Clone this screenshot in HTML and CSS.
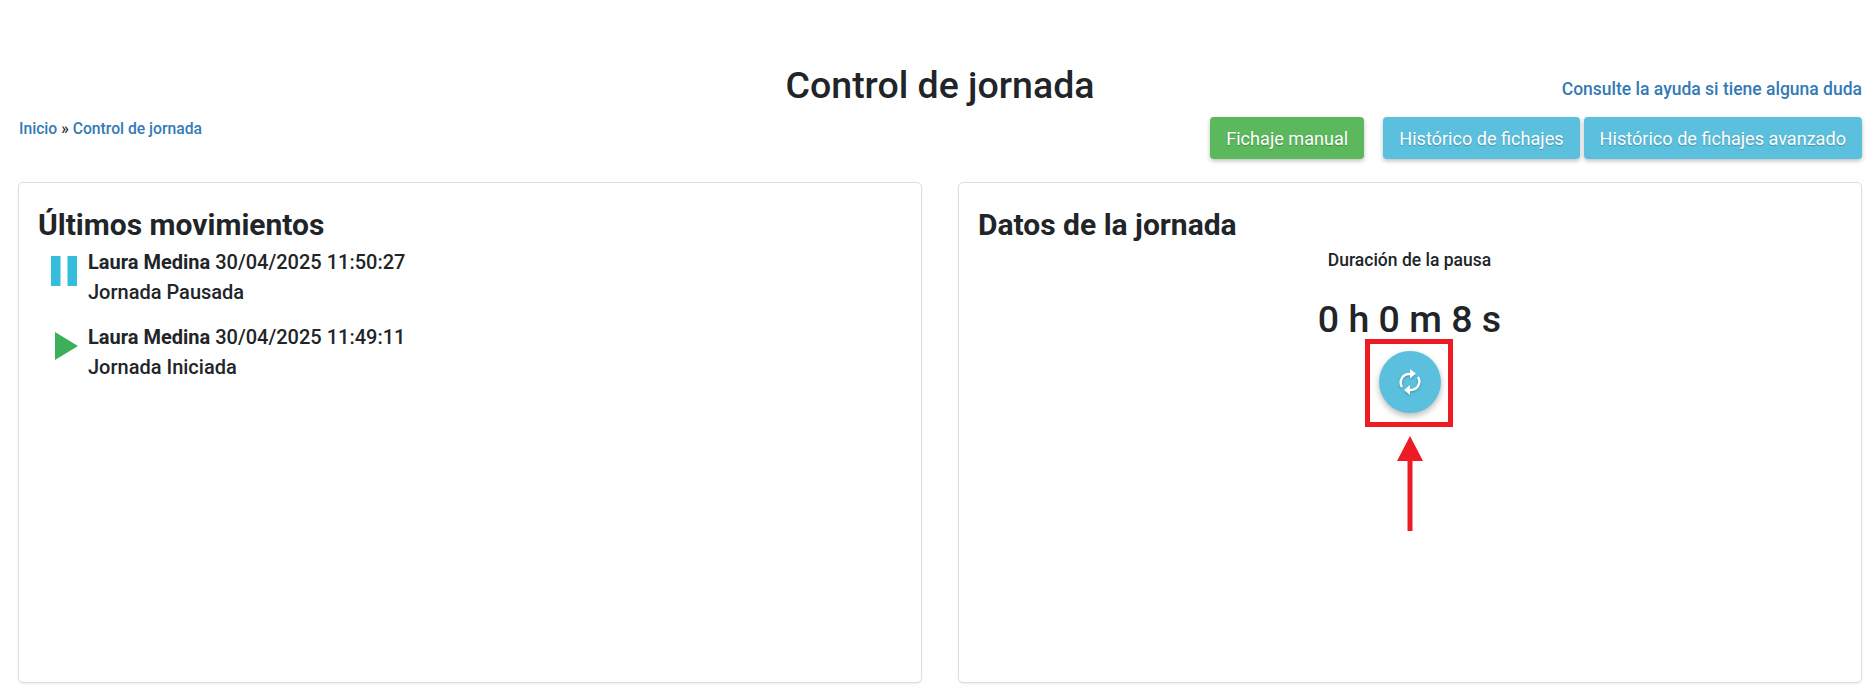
FILE: index.html
```html
<html>
  <head>
    <title>Control de jornada</title>
    <meta name="viewport" content="width=device-width, initial-scale=1.0">
    <link rel="stylesheet" href="styles.css">
  </head>
  <body>
    <div class="page">
      <div class="title_row">
        <div></div>
        <h1 class="page_title">Control de jornada</h1>
        <a class="help_link" href="#">Consulte la ayuda si tiene alguna duda</a>
      </div>

      <div class="tools_row">
        <div class="breadcrumb"><a href="#">Inicio</a> » <a href="#">Control de jornada</a></div>
        <div class="tools">
          <button class="btn btn_success btn_manual">Fichaje manual</button>
          <button class="btn btn_info">Histórico de fichajes</button>
          <button class="btn btn_info">Histórico de fichajes avanzado</button>
        </div>
      </div>

      <div class="panels">
        <section class="panel">
          <h2 class="panel_title">Últimos movimientos</h2>
          <div class="movement">
            <svg class="movement_icon" width="50" height="50" viewBox="0 0 50 50">
              <rect x="13" y="9" width="9.5" height="30" fill="#36bcdc"></rect>
              <rect x="29.5" y="9" width="9.5" height="30" fill="#36bcdc"></rect>
            </svg>
            <div>
              <div><b>Laura Medina</b> 30/04/2025 11:50:27</div>
              <div>Jornada Pausada</div>
            </div>
          </div>
          <div class="movement">
            <svg class="movement_icon" width="50" height="50" viewBox="0 0 50 50">
              <polygon points="17,10 40,24 17,38" fill="#3daf5b"></polygon>
            </svg>
            <div>
              <div><b>Laura Medina</b> 30/04/2025 11:49:11</div>
              <div>Jornada Iniciada</div>
            </div>
          </div>
        </section>

        <section class="panel">
          <h2 class="panel_title">Datos de la jornada</h2>
          <div class="pause_label">Duración de la pausa</div>
          <div class="pause_time">0 h 0 m 8 s</div>
          <div class="reload_wrap">
            <button class="reload_btn">
              <svg class="reload_icon" width="22" height="28" viewBox="0 0 22 28">
                <path d="M3 19 A8.5 8.5 0 0 1 11 6" fill="none" stroke="#fff" stroke-width="2.4"></path>
                <polygon points="11,1 17,5.5 11,10.5" fill="#fff"></polygon>
                <path d="M19 9 A8.5 8.5 0 0 1 11 22" fill="none" stroke="#fff" stroke-width="2.4"></path>
                <polygon points="11,17 5,22 11,27" fill="#fff"></polygon>
              </svg>
            </button>
            <!-- red annotation on top of the screenshot -->
            <div class="mark_box"></div>
            <svg class="mark_arrow" width="26" height="96" viewBox="0 0 26 96">
              <polygon points="13,0 26,25 15.5,25 15.5,95 10.5,95 10.5,25 0,25" fill="#ed1c24"></polygon>
            </svg>
          </div>
        </section>
      </div>
    </div>
  </body>
</html>
```

FILE: styles.css
```css
:root {
  --text: #212529;
  --link: #337ab7;
  --info: #5bc0de;
  --success: #5cb85c;
  --mark: #ed1c24;
}

html {
  overflow: hidden;
}

body {
  margin: 0;
  background-color: #ffffff;
  color: var(--text);
  font-family: Roboto, "Liberation Sans", sans-serif;
  font-size: 20px;
  font-weight: 500;
}

a {
  color: var(--link);
  text-decoration: none;
}

.page {
  padding: 61px 9px 0 18px;
}

.title_row {
  display: grid;
  grid-template-columns: 1fr auto 1fr;
  align-items: center;
  height: 48px;
}

.page_title {
  margin: 0;
  font-size: 37.5px;
  font-weight: 500;
  line-height: 48px;
}

.help_link {
  justify-self: end;
  font-size: 17.5px;
  margin-top: 8px;
}

.tools_row {
  display: flex;
  justify-content: space-between;
  align-items: flex-start;
  margin-top: 8px;
}

.breadcrumb {
  font-size: 15.7px;
  line-height: 24px;
  padding-left: 1px;
}

.tools {
  display: flex;
  gap: 4px;
}

.btn {
  height: 42px;
  padding: 0 16px;
  border: none;
  border-radius: 4px;
  color: #ffffff;
  font-family: Roboto, "Liberation Sans", sans-serif;
  font-size: 18.1px;
  font-weight: 400;
  text-shadow: 0 1px 1px rgba(0, 0, 0, 0.25);
  box-shadow: 0 2px 4px rgba(0, 0, 0, 0.25);
  cursor: pointer;
}

.btn_success {
  background-color: var(--success);
}

.btn_info {
  background-color: var(--info);
}

.btn_manual {
  margin-right: 15px;
}

.panels {
  display: grid;
  grid-template-columns: 1fr 1fr;
  gap: 36px;
  margin-top: 23px;
}

.panel {
  height: 501px;
  box-sizing: border-box;
  padding: 22px 20px 0 19px;
  border: 1px solid #dddddd;
  border-radius: 5px;
  box-shadow: 0 1px 2px rgba(0, 0, 0, 0.08);
}

.panel_title {
  margin: 0 0 2px;
  font-size: 30px;
  font-weight: 700;
  line-height: 40px;
}

.movement {
  display: flex;
  line-height: 30px;
  margin-bottom: 15px;
}

.movement b {
  font-weight: 700;
}

.movement_icon {
  flex: none;
}

.pause_label {
  text-align: center;
  font-size: 17.5px;
  line-height: 24px;
  margin-top: 3px;
}

.pause_time {
  text-align: center;
  font-size: 37.5px;
  line-height: 44px;
  margin-top: 25px;
}

.reload_wrap {
  position: relative;
  width: 62px;
  margin: 10px auto 0;
}

.reload_btn {
  display: flex;
  align-items: center;
  justify-content: center;
  width: 62px;
  height: 62px;
  padding: 0;
  border: none;
  border-radius: 50%;
  background-color: var(--info);
  box-shadow: 0 3px 6px rgba(0, 0, 0, 0.28);
  cursor: pointer;
}

.reload_icon {
  filter: drop-shadow(0 1px 1px rgba(0, 0, 0, 0.25));
}

.mark_box {
  position: absolute;
  top: -12px;
  left: -14px;
  width: 88px;
  height: 88px;
  box-sizing: border-box;
  border: 5px solid var(--mark);
}

.mark_arrow {
  position: absolute;
  top: 85px;
  left: 18px;
}
```
